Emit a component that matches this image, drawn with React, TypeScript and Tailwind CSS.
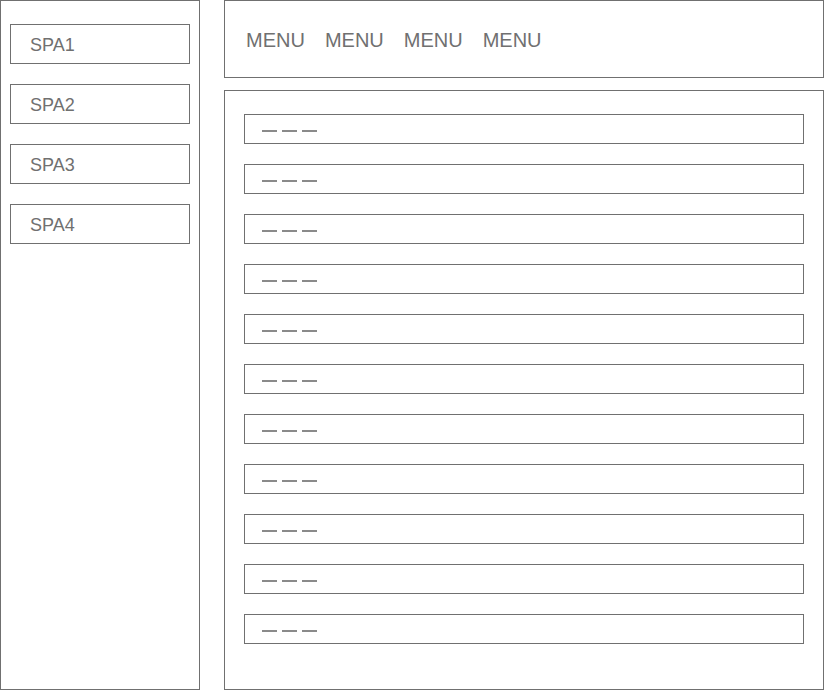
import React from "react";

export default function App() {
  const spas = ["SPA1", "SPA2", "SPA3", "SPA4"];
  const rows = Array.from({ length: 11 });
  return (
    <div
      className="flex w-[824px] h-[690px] bg-white gap-[24px] text-[#707070]"
      style={{ fontFamily: '"Liberation Sans", Arial, sans-serif' }}
    >
      <div className="w-[200px] h-[690px] border border-[#707070] pt-[23px] px-[9px] flex flex-col gap-[20px]">
        {spas.map((s) => (
          <div
            key={s}
            className="w-[180px] h-[40px] border border-[#707070] flex items-center pl-[19px] pt-[2px] text-[18px]"
          >
            {s}
          </div>
        ))}
      </div>
      <div className="flex-1 flex flex-col gap-[12px] h-[690px]">
        <div className="h-[78px] border border-[#707070] flex items-center pl-[21px] pt-[2px] gap-[20px] text-[20px]">
          <span>MENU</span>
          <span>MENU</span>
          <span>MENU</span>
          <span>MENU</span>
        </div>
        <div className="flex-1 border border-[#707070] pt-[23px] px-[19px] flex flex-col gap-[20px]">
          {rows.map((_, i) => (
            <div
              key={i}
              className="h-[30px] border border-[#707070] flex items-center pl-[17px] gap-[5px]"
            >
              <div className="w-[15px] h-[1.5px] bg-[#8a8a8a] mt-[4px]" />
              <div className="w-[15px] h-[1.5px] bg-[#8a8a8a] mt-[4px]" />
              <div className="w-[15px] h-[1.5px] bg-[#8a8a8a] mt-[4px]" />
            </div>
          ))}
        </div>
      </div>
    </div>
  );
}
